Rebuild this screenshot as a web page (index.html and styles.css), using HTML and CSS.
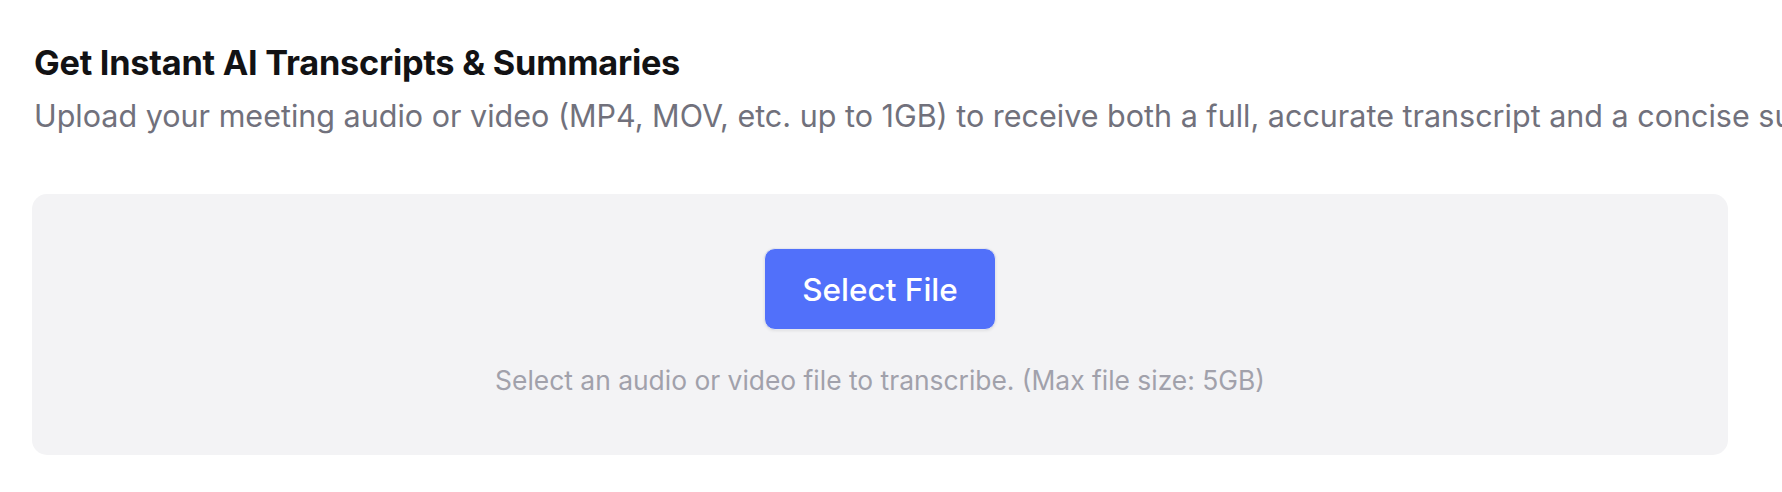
FILE: index.html
```html
<!DOCTYPE html>
<html lang="en">
<head>
<meta charset="utf-8">
<title>Get Instant AI Transcripts &amp; Summaries</title>
<link rel="stylesheet" href="styles.css">
</head>
<body>
<main class="page">
  <header class="intro">
    <h1 class="title">Get Instant AI Transcripts &amp; Summaries</h1>
    <p class="subtitle">Upload your meeting audio or video (MP4, MOV, etc. up to 1GB) to receive both a full, accurate transcript and a concise summary of key points, decisions, and action items.</p>
  </header>
  <section class="dropzone">
    <button class="select-btn" type="button">Select File</button>
    <p class="hint">Select an audio or video file to transcribe. (Max file size: 5GB)</p>
  </section>
</main>
</body>
</html>
```
FILE: styles.css
```css
* { box-sizing: border-box; }
html, body {
  margin: 0;
  padding: 0;
  background: #ffffff;
  overflow: hidden;
}
body {
  font-family: Inter, "Noto Sans", "Liberation Sans", sans-serif;
  width: 1782px;
  height: 492px;
}
.page {
  padding: 43px 54px 0 32px;
}
.intro {
  padding-left: 2px;
}
.title {
  margin: 0;
  font-size: 34.3px;
  line-height: 40px;
  font-weight: 700;
  color: #121214;
  letter-spacing: -0.25px;
}
.subtitle {
  margin: 13px 0 0;
  font-size: 30.5px;
  line-height: 40px;
  font-weight: 400;
  color: #71717c;
  white-space: nowrap;
}
.dropzone {
  margin-top: 58px;
  height: 261px;
  background: #f3f3f5;
  border-radius: 15px;
  display: flex;
  flex-direction: column;
  align-items: center;
  padding-top: 54px;
}
.select-btn {
  height: 82px;
  padding: 0 37px;
  border: 1px solid #e4e6ee;
  border-radius: 11px;
  background: #5170fa;
  color: #ffffff;
  font-family: inherit;
  font-size: 31.5px;
  font-weight: 500;
  box-shadow: 0 1px 3px rgba(0, 0, 0, 0.08);
  cursor: pointer;
}
.hint {
  margin: 32px 0 0;
  font-size: 26.4px;
  line-height: 36px;
  color: #a1a1ab;
}
```
